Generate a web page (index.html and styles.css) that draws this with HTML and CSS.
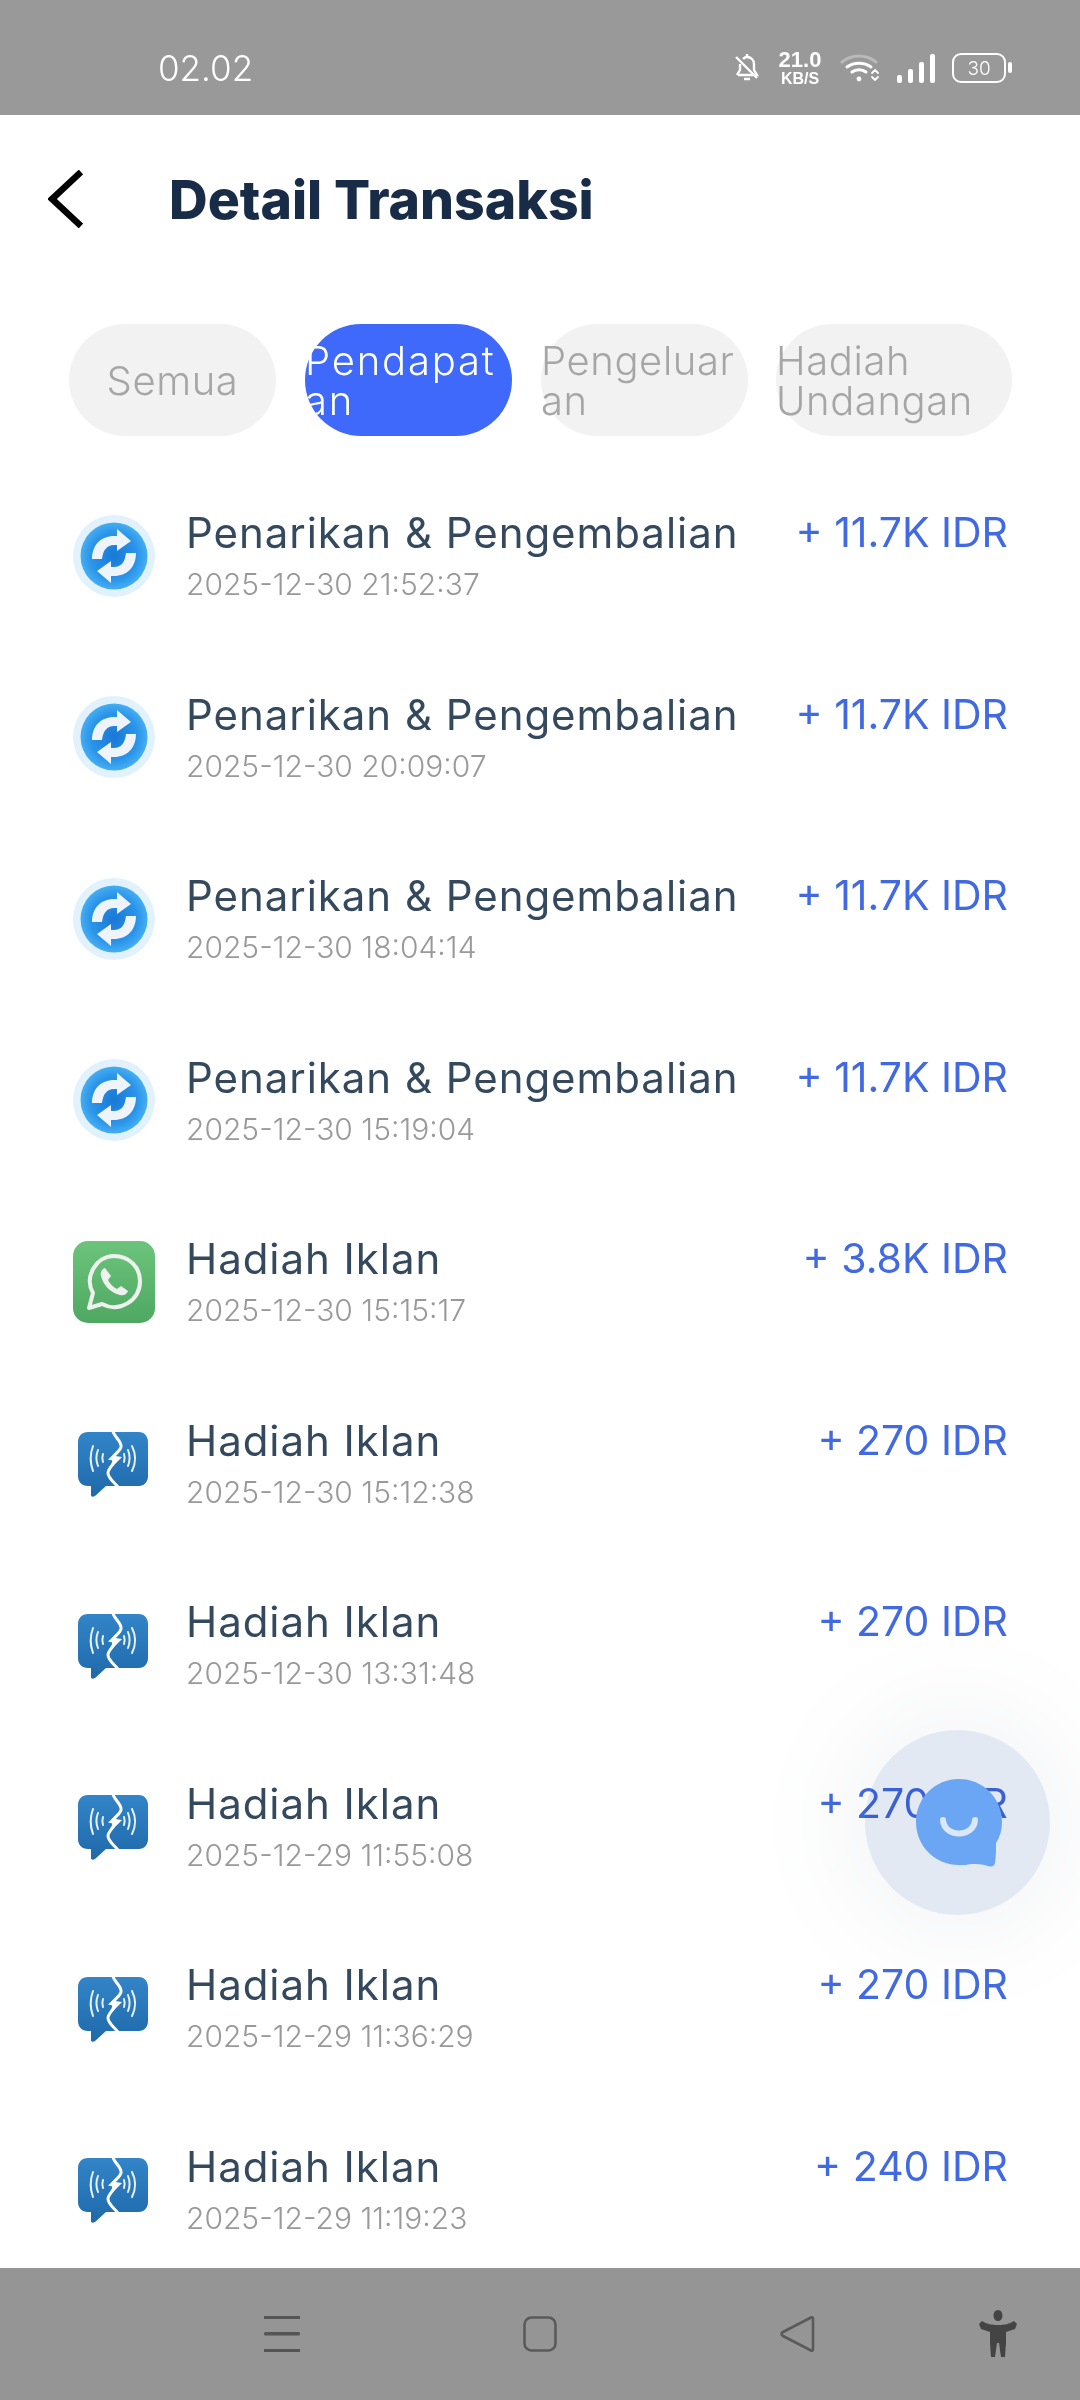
FILE: index.html
```html
<!DOCTYPE html>
<html lang="en">

<head>
  <meta charset="UTF-8" />
  <meta name="viewport" content="width=device-width, initial-scale=1.0" />
  <title>Detail Transaksi</title>
  <link rel="stylesheet" href="styles.css">
</head>

<body>
  <svg class="defs" width="0" height="0" aria-hidden="true">
    <defs>
      <radialGradient id="disc" cx="50%" cy="50%" r="50%">
        <stop offset="0%" stop-color="#1a78d6" />
        <stop offset="70%" stop-color="#2a94ea" />
        <stop offset="100%" stop-color="#45aef2" />
      </radialGradient>
      <linearGradient id="green" x1="0" y1="0" x2="0" y2="1">
        <stop offset="0%" stop-color="#6cc47c" />
        <stop offset="100%" stop-color="#4fa862" />
      </linearGradient>
      <linearGradient id="talk" x1="0" y1="0" x2="0" y2="1">
        <stop offset="0%" stop-color="#3285c8" />
        <stop offset="100%" stop-color="#1f69aa" />
      </linearGradient>

      <symbol id="ic-refund" viewBox="0 0 82 82">
        <circle cx="41" cy="41" r="41" fill="#e2f2fd" />
        <circle cx="41" cy="41" r="33.500" fill="url(#disc)" />
        <path d="M19 44c0-14 9-23 22-23l3 0 0-7 14 12-14 10 0-6-3 0c-7 0-11 5-12 14z" fill="#eef4fa" />
        <path d="M63 38c0 14-9 23-22 23l-3 0 0 7-14-12 14-10 0 6 3 0c7 0 11-5 12-14z" fill="#eef4fa" />
      </symbol>

      <symbol id="ic-whatsapp" viewBox="0 0 82 82">
        <rect width="82" height="82" rx="15" fill="url(#green)" />
        <path d="M16 67l4-15c-9-16 3-37 21-37 15 0 26 11 26 25 0 20-21 32-38 23z" fill="none" stroke="#eef2ee" stroke-width="4" stroke-linejoin="round" />
        <path d="M32 27c-3 1-5 4-4 8 2 9 10 17 19 19 4 1 7-1 8-4l-7-5-4 3c-4-2-7-5-9-9l3-4z" fill="#eef2ee" />
      </symbol>

      <symbol id="ic-talk" viewBox="0 0 82 82">
        <path d="M15 10h51c5 0 9 4 9 10v34c0 6-4 10-9 10H33L22 74c-2 1-4 1-4-1v-9h-3C9 64 5 60 5 54V20c0-6 4-10 10-10z" fill="url(#talk)" />
        <path d="M40 9c1 6 9 10 8 16-1 4-5 6-8 10 1 3 1 5 0 7-3 4-5 6-5 9 0 5 6 9 10 14" fill="none" stroke="#fff" stroke-width="3" />
        <path d="M49 25 35 37.500l7 1.500-6 9 13-13-7-1z" fill="#fff" />
        <g fill="none" stroke="#e8f1f8" stroke-width="2" stroke-linecap="round">
          <path d="M20 24c-3 8-3 17 0 25" />
          <path d="M25 28c-2 5-2 11 0 16" />
          <path d="M30 32c-1 3-1 5 0 8" />
          <path d="M59 24c4 8 4 17 0 25" />
          <path d="M55 28c2 5 2 11 0 16" />
          <path d="M51 32c1 3 1 5 0 8" />
        </g>
      </symbol>
    </defs>
  </svg>

  <div class="phone">
    <div class="status-bar">
      <span class="clock">02.02</span>
      <div class="status-icons">
        <svg class="bell" width="26" height="28" viewBox="0 0 26 28" fill="none" stroke="#fff" stroke-width="2.400">
          <path d="M4 21h19l-3-5v-6c0-4-3-7-7-7-2 0-3 1-4 2" />
          <path d="M6 10v6l-3 5" />
          <path d="M2 3l21 21" />
          <path d="M13 0v3M10 25h6" />
        </svg>
        <div class="speed">
          <span class="speed-num">21.0</span>
          <span class="speed-unit">KB/S</span>
        </div>
        <svg class="wifi" width="40" height="28" viewBox="0 0 40 28" fill="none" stroke-linecap="round">
          <path d="M2 8c10-8 24-8 34 0" stroke="#b9b9b9" stroke-width="3" />
          <path d="M7 13c7-5 17-5 24 0" stroke="#fff" stroke-width="3" />
          <path d="M12 18c4-3 10-3 14 0" stroke="#fff" stroke-width="3" />
          <circle cx="19" cy="25" r="2.400" fill="#fff" />
          <path d="M32 19l3-3 3 3M32 23l3 3 3-3" stroke="#fff" stroke-width="1.800" />
        </svg>
        <svg class="signal" width="38" height="29" viewBox="0 0 38 29" fill="#fff">
          <rect x="0" y="21" width="5" height="8" rx="2" />
          <rect x="11" y="15" width="5" height="14" rx="2" />
          <rect x="22" y="8" width="5" height="21" rx="2" />
          <rect x="33" y="0" width="5" height="29" rx="2" />
        </svg>
        <div class="battery"><span class="battery-level">30</span></div>
      </div>
    </div>

    <div class="header">
      <svg class="back" width="35" height="58" viewBox="0 0 35 58" fill="none" stroke="#000" stroke-width="6.500">
        <path d="M33 2 4 29l29 27" stroke-linejoin="miter" />
      </svg>
      <h1 class="title">Detail Transaksi</h1>
    </div>

    <div class="tabs">
      <div class="tab"><span>Semua</span></div>
      <div class="tab active wrap"><span>Pendapat<br>an</span></div>
      <div class="tab wrap"><span>Pengeluar<br>an</span></div>
      <div class="tab wide wrap"><span>Hadiah<br>Undangan</span></div>
    </div>

    <div class="list">
      <div class="row">
        <svg class="row-icon soft"><use href="#ic-refund" /></svg>
        <div class="info"><div class="name">Penarikan &amp; Pengembalian</div><div class="date">2025-12-30 21:52:37</div></div>
        <div class="amount">+ 11.7K IDR</div>
      </div>
      <div class="row">
        <svg class="row-icon soft"><use href="#ic-refund" /></svg>
        <div class="info"><div class="name">Penarikan &amp; Pengembalian</div><div class="date">2025-12-30 20:09:07</div></div>
        <div class="amount">+ 11.7K IDR</div>
      </div>
      <div class="row">
        <svg class="row-icon soft"><use href="#ic-refund" /></svg>
        <div class="info"><div class="name">Penarikan &amp; Pengembalian</div><div class="date">2025-12-30 18:04:14</div></div>
        <div class="amount">+ 11.7K IDR</div>
      </div>
      <div class="row">
        <svg class="row-icon soft"><use href="#ic-refund" /></svg>
        <div class="info"><div class="name">Penarikan &amp; Pengembalian</div><div class="date">2025-12-30 15:19:04</div></div>
        <div class="amount">+ 11.7K IDR</div>
      </div>
      <div class="row">
        <svg class="row-icon"><use href="#ic-whatsapp" /></svg>
        <div class="info"><div class="name">Hadiah Iklan</div><div class="date">2025-12-30 15:15:17</div></div>
        <div class="amount">+ 3.8K IDR</div>
      </div>
      <div class="row">
        <svg class="row-icon"><use href="#ic-talk" /></svg>
        <div class="info"><div class="name">Hadiah Iklan</div><div class="date">2025-12-30 15:12:38</div></div>
        <div class="amount">+ 270 IDR</div>
      </div>
      <div class="row">
        <svg class="row-icon"><use href="#ic-talk" /></svg>
        <div class="info"><div class="name">Hadiah Iklan</div><div class="date">2025-12-30 13:31:48</div></div>
        <div class="amount">+ 270 IDR</div>
      </div>
      <div class="row">
        <svg class="row-icon"><use href="#ic-talk" /></svg>
        <div class="info"><div class="name">Hadiah Iklan</div><div class="date">2025-12-29 11:55:08</div></div>
        <div class="amount">+ 270 IDR</div>
      </div>
      <div class="row">
        <svg class="row-icon"><use href="#ic-talk" /></svg>
        <div class="info"><div class="name">Hadiah Iklan</div><div class="date">2025-12-29 11:36:29</div></div>
        <div class="amount">+ 270 IDR</div>
      </div>
      <div class="row">
        <svg class="row-icon"><use href="#ic-talk" /></svg>
        <div class="info"><div class="name">Hadiah Iklan</div><div class="date">2025-12-29 11:19:23</div></div>
        <div class="amount">+ 240 IDR</div>
      </div>
    </div>

    <div class="nav-bar">
      <svg width="36" height="36" viewBox="0 0 36 36" fill="#555">
        <rect y="0" width="36" height="3" />
        <rect y="16" width="36" height="3.500" rx="1.500" />
        <rect y="33" width="36" height="3" />
      </svg>
      <svg width="34" height="36" viewBox="0 0 34 36" fill="none" stroke="#5a5a5a" stroke-width="2.600">
        <rect x="1.500" y="1.500" width="31" height="33" rx="7" />
      </svg>
      <svg width="36" height="36" viewBox="0 0 36 36" fill="none" stroke="#5a5a5a" stroke-width="2.600" stroke-linejoin="round">
        <path d="M33 2.500v31c0 1-1 1.500-2 1L3 20c-2-1-2-3 0-4L31 1.500c1-.5 2 0 2 1z" />
      </svg>
      <svg class="nav-a11y" width="38" height="48" viewBox="0 0 38 48" fill="#444">
        <ellipse cx="19" cy="5.500" rx="4.500" ry="5.500" />
        <path d="M0 14l3-3c5 3 9 4 16 4s11-1 16-4l3 3-2 5-9 3v11l-1 14h-4l-2-14h-2l-2 14h-4l-1-14V22l-9-3z" />
      </svg>
    </div>

    <div class="fab-halo"></div>
    <svg class="fab-bubble" width="88" height="90" viewBox="0 0 88 90">
      <path d="M44 1c24 0 43 19 43 43 0 8-2 15-6 21 0 6 0 13-1 20-1 4-4 4-7 3-6-2-12-2-17-2-3 1-8 1-12 1C20 87 1 68 1 44S20 1 44 1z" fill="#6ba6f4" />
      <path d="M28 42c1 18 31 18 32 0" fill="none" stroke="#dce7f6" stroke-width="6" stroke-linecap="round" />
    </svg>
  </div>
</body>

</html>
```

FILE: styles.css
```css
* {
  box-sizing: border-box;
}

html,
body {
  margin: 0;
  padding: 0;
  background-color: #fff;
}

.defs {
  position: absolute;
}

.phone {
  position: relative;
  width: 1080px;
  height: 2400px;
  overflow: hidden;
  display: flex;
  flex-direction: column;
  font-family: Inter, "Liberation Sans", sans-serif;
  background-color: #fff;
}

.status-bar {
  flex: none;
  height: 115px;
  background-color: #999;
  color: #fff;
  display: flex;
  align-items: center;
  justify-content: space-between;
  padding: 21px 70px 0 158px;
}

.clock {
  font-size: 35px;
  font-weight: 300;
}

.status-icons {
  display: flex;
  align-items: center;
  gap: 17px;
}

.speed {
  display: flex;
  flex-direction: column;
  align-items: center;
  width: 46px;
  line-height: 1;
  font-family: "Liberation Sans", sans-serif;
  font-weight: 700;
}

.speed-num {
  font-size: 22px;
}

.speed-unit {
  font-size: 16px;
}

.battery {
  position: relative;
  width: 54px;
  height: 30px;
  border: 2.500px solid #fff;
  border-radius: 9px;
  margin-right: 4px;
  display: flex;
  align-items: center;
  justify-content: center;
}

.battery::after {
  content: "";
  position: absolute;
  right: -8px;
  top: 7px;
  width: 4px;
  height: 11px;
  border-radius: 2px;
  background-color: #fff;
}

.battery-level {
  font-size: 19px;
  font-weight: 300;
  line-height: 1;
}

.header {
  flex: none;
  height: 168px;
  display: flex;
  align-items: center;
  padding-left: 48px;
  gap: 86px;
}

.title {
  margin: 0;
  font-size: 53.500px;
  font-weight: 800;
  color: #182c47;
}

.tabs {
  flex: none;
  height: 112px;
  margin-top: 41px;
  padding-left: 69px;
  display: flex;
  gap: 29px;
}

.tab {
  flex: none;
  width: 207px;
  padding-top: 2px;
  border-radius: 56px;
  background-color: #f2f2f2;
  color: #a6a6a6;
  font-size: 40px;
  font-weight: 300;
  letter-spacing: 0.6px;
  line-height: 40px;
  display: flex;
  align-items: center;
  justify-content: center;
}

.tab span {
  white-space: nowrap;
}

.tab.wrap span {
  width: 100%;
}

.tab.active {
  background-color: #3f69fb;
  color: #fff;
  letter-spacing: 1.800px;
}

.tab.wide {
  width: 236px;
  margin-left: -1px;
}

.list {
  flex: 1;
  min-height: 0;
  margin-top: 29px;
  padding: 0 72px 0 73px;
}

.row {
  height: 181.500px;
  display: flex;
  align-items: center;
}

.row-icon {
  flex: none;
  width: 82px;
  height: 82px;
}

.row-icon.soft {
  filter: blur(0.6px);
}

.info {
  flex: 1;
  margin-left: 31px;
  padding-top: 5px;
}

.name {
  font-size: 42px;
  line-height: 52px;
  letter-spacing: 0.95px;
  color: #34495e;
}

.date {
  font-size: 30px;
  line-height: 50px;
  color: #999;
  font-weight: 300;
}

.amount {
  flex: none;
  font-size: 41px;
  line-height: 52px;
  margin-bottom: 47px;
  color: #4169e1;
}

.nav-bar {
  flex: none;
  height: 132px;
  background-color: #959595;
  display: flex;
  align-items: center;
  gap: 223px;
  padding: 0 0 0 264px;
}

.nav-bar svg {
  flex: none;
}

.nav-a11y {
  margin-left: -60px;
}

.fab-halo {
  position: absolute;
  left: 865px;
  top: 1730px;
  width: 185px;
  height: 185px;
  border-radius: 50%;
  background-color: #e3e9f3;
  box-shadow: 0 0 90px 25px rgba(120, 130, 150, 0.08);
  mix-blend-mode: multiply;
}

.fab-bubble {
  position: absolute;
  left: 915px;
  top: 1778px;
}
```
